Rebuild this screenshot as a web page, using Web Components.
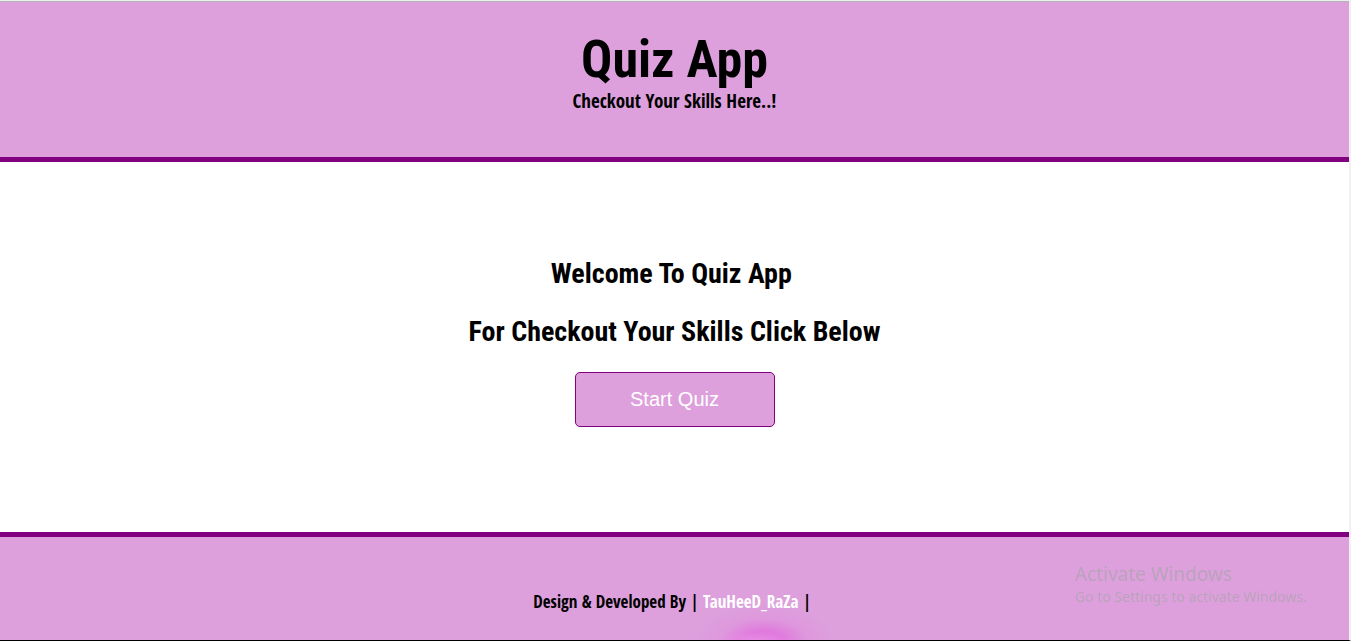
<!DOCTYPE html>
<html lang="en">
<head>
<meta charset="utf-8">
<title>Quiz App</title>
<style>
html, body { margin: 0; height: 100%; }
body { background: #fff; color: #000; font-family: "Roboto Condensed", Roboto, sans-serif; --small-font: "Open Sans Condensed", "Open Sans", sans-serif; }
</style>
</head>
<body>
<quiz-app>
  <quiz-header slot="header"><span slot="title">Quiz App</span><span slot="tagline">Checkout Your Skills Here..!</span></quiz-header>
  <quiz-welcome><span slot="first">Welcome To Quiz App&nbsp;</span><span slot="second">For Checkout Your Skills Click Below</span><span slot="action">Start Quiz</span></quiz-welcome>
  <quiz-footer slot="footer">TauHeeD_RaZa</quiz-footer>
</quiz-app>
<activation-notice></activation-notice>

<template id="app">
  <style>
    :host { display: flex; flex-direction: column; box-sizing: border-box; min-height: 100vh; border: solid; border-width: 1px 2px 1px 0; border-color: #eee #f1f1f1 #000; }
    main { flex: 1; display: grid; align-items: center; }
  </style>
  <slot name="header"></slot>
  <main><slot></slot></main>
  <slot name="footer"></slot>
</template>

<template id="header">
  <style>
    :host { display: block; background: plum; border-top: 1px solid #b4b4b4; border-bottom: 5px solid purple; text-align: center; }
    header { padding: 28px 16px 44px; }
    h1 { margin: 0; font-size: 52px; line-height: 60px; font-weight: bold; }
    p { margin: 0; font: bold 19px/23px var(--small-font); }
  </style>
  <header><h1><slot name="title"></slot></h1><p><slot name="tagline"></slot></p></header>
</template>

<template id="welcome">
  <style>
    :host { display: block; text-align: center; }
    section { display: flex; flex-direction: column; align-items: center; gap: 22px; padding: 0 16px 12px; }
    h2 { margin: 0; font-size: 28px; line-height: 36px; font-weight: bold; }
    button { box-sizing: border-box; width: 200px; height: 55px; padding: 0; border: 1px solid purple; border-radius: 5px; background: plum; color: #fff; font: 20px "Liberation Sans", Arial, sans-serif; cursor: pointer; }
  </style>
  <section><h2><slot name="first"></slot></h2><h2><slot name="second"></slot></h2><button type="button"><slot name="action"></slot></button></section>
</template>

<template id="footer">
  <style>
    :host {
      display: block; border-top: 5px solid purple;
      background:
        radial-gradient(36px 8px at calc(50% + 80px) 100%, #e78be3 0, #e78be300 100%),
        radial-gradient(72px 36px at calc(50% + 90px) 100%, #e07ade 0, #e07ade 25%, #df90dd80 60%, #dda0dd00 100%),
        plum;
    }
    footer { padding: 53px 16px 26px; text-align: center; font: bold 17px/24px var(--small-font); }
    a { color: #fff; text-decoration: none; }
  </style>
  <footer>Design &amp; Developed By | <a href="#"><slot></slot></a> |&nbsp;</footer>
</template>

<template id="notice">
  <style>
    :host { position: fixed; right: 44px; bottom: 34px; color: #b9a3bb; font-family: "Noto Sans", sans-serif; pointer-events: none; }
    p { margin: 0; }
    .title { font-size: 19px; line-height: 26px; }
    .detail { font-size: 14px; line-height: 20px; }
  </style>
  <p class="title">Activate Windows</p>
  <p class="detail">Go to Settings to activate Windows.</p>
</template>

<script>
class TemplateElement extends HTMLElement {
  constructor() {
    super();
    const template = document.getElementById(this.constructor.template);
    this.attachShadow({ mode: "open" }).append(template.content.cloneNode(true));
  }
}
customElements.define("quiz-app", class extends TemplateElement { static template = "app"; });
customElements.define("quiz-header", class extends TemplateElement { static template = "header"; });
customElements.define("quiz-welcome", class extends TemplateElement { static template = "welcome"; });
customElements.define("quiz-footer", class extends TemplateElement { static template = "footer"; });
customElements.define("activation-notice", class extends TemplateElement { static template = "notice"; });
</script>
</body>
</html>
